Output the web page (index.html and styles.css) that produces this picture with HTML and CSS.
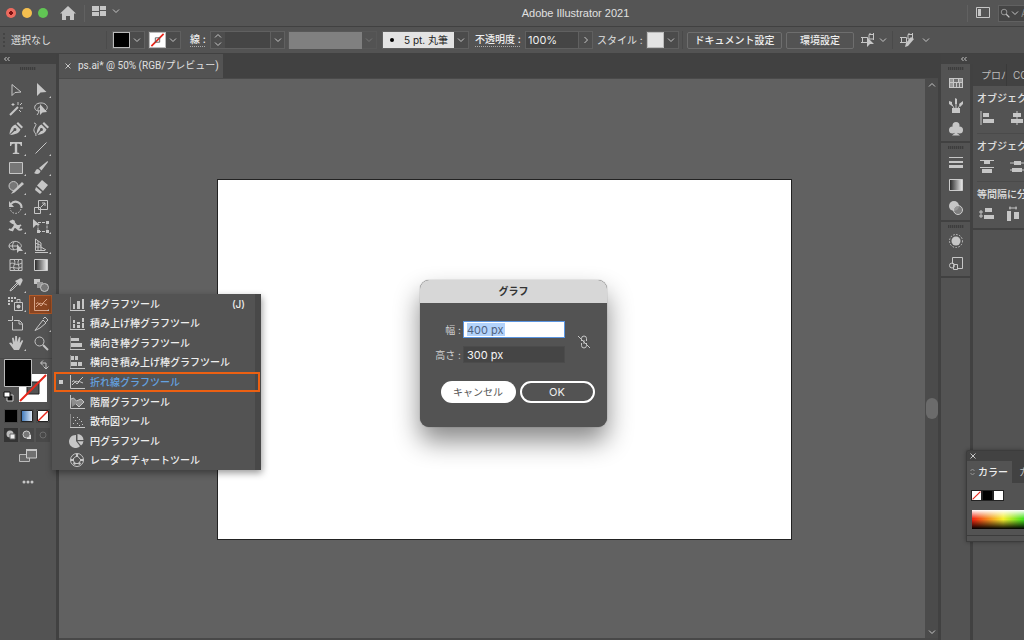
FILE: index.html
```html
<!DOCTYPE html>
<html lang="ja">
<head>
<meta charset="utf-8">
<title>Adobe Illustrator 2021</title>
<link rel="stylesheet" href="styles.css">
</head>
<body>
<svg class="defs" aria-hidden="true">
  <symbol id="down" viewBox="0 0 8 8"><path d="M1 2.500 4 5.500 7 2.500" class="ln"/></symbol>
  <symbol id="up" viewBox="0 0 8 8"><path d="M1 5.500 4 2.500 7 5.500" class="ln"/></symbol>
  <symbol id="none" viewBox="0 0 16 16"><path d="M0 0h16v16H0z" fill="#fff"/><path d="M1 15 15 1" stroke="#e8271b" stroke-width="2"/></symbol>
  <symbol id="collapse" viewBox="0 0 8 6"><path d="M3.500 1 1.500 3l2 2M6.500 1l-2 2 2 2" class="ln"/></symbol>
  <symbol id="bar" viewBox="0 0 16 16"><path d="M1.500 1v13" class="ax"/><path d="M1 14.500h15" class="ln"/><path d="M4 8h2v5H4zM8 5h3v8H8zM13 3h2v10h-2z" class="fl"/></symbol>
  <symbol id="stackbar" viewBox="0 0 16 16"><path d="M1.500 1v13" class="ax"/><path d="M1 14.500h15" class="ln"/><path d="M4 5h2v3H4zM4 9h2v4H4zM8 7h3v2H8zM8 10h3v3H8zM13 3h2v4h-2zM13 8h2v5h-2z" class="fl"/></symbol>
  <symbol id="hbar" viewBox="0 0 16 16"><path d="M1.500 1v13" class="ax"/><path d="M1 14.500h15" class="ln"/><path d="M2 3h8v3H2zM2 8h11v4H2z" class="fl"/></symbol>
  <symbol id="hstack" viewBox="0 0 16 16"><path d="M1.500 1v13" class="ax"/><path d="M1 14.500h15" class="ln"/><path d="M2 2h3v4H2zM6 2h3v4H6zM2 8h6v4H2zM9 8h4v4H9z" class="fl"/></symbol>
  <symbol id="line" viewBox="0 0 16 16"><path d="M1.500 1v13.500H16" class="ln"/><path d="m3 11 4-4 2 1 5-5M3 8l2-1.500L8 10l2.500-2.500L14 9" class="ln"/></symbol>
  <symbol id="area" viewBox="0 0 16 16"><path d="M1.500 1v13.500H16" class="ln"/><path d="M2 5 4.500 4l3 3L12 5l3 3-5 5-3-3-4 3z" fill="#8d8d8d"/><path d="M2 5 4.500 4l3 3L12 5l3 3-5 5-3-3" class="ln"/></symbol>
  <symbol id="scatter" viewBox="0 0 16 16"><path d="M1.500 1v13" class="ax"/><path d="M1 14.500h15" class="ln"/><path d="M4 4h1v1H4zM8 4h1v1H8zM6 7h1v1H6zM10 6h1v1h-1zM4 10h1v1H4zM8 10h1v1H8zM12 8h1v1h-1zM13 11h1v1h-1zM10 12h1v1h-1z" class="fl"/></symbol>
  <symbol id="pie" viewBox="0 0 16 16"><path d="M7 2v6l4 5.200A6.500 6.500 0 1 1 7 2z" class="fl"/><path d="M8.500 1A6 6 0 0 1 14.500 7h-6zM8.500 8.300h6a6 6 0 0 1-2.500 4.200z" class="fl"/></symbol>
  <symbol id="radar" viewBox="0 0 16 16"><circle cx="8" cy="8" r="6.500" class="ln"/><path d="M8 3.500 12 8l-2.500 3.500h-4L4 7z" class="ln"/><path d="M7 2h2v3H7zM11 7h3v2h-3zM2 7h3v2H2zM4 11l2-1 1 2-2 1zM10 10l2 1-1 2-2-1z" class="fl"/></symbol>
  <symbol id="select" viewBox="0 0 16 16"><path d="M4 2.500v11l3-3 6-.5z" class="ln"/></symbol>
  <symbol id="direct" viewBox="0 0 16 16"><path d="M4 1v13l3.500-3.500L13.500 10z" class="fl"/></symbol>
  <symbol id="wand" viewBox="0 0 16 16"><path d="M2 14 10 6" class="ln2"/><path d="M5 2v3M3.500 3.500h3M10 1v3M12 4l2-2M12 7h3M11 9l2 2" class="ln"/></symbol>
  <symbol id="lasso" viewBox="0 0 16 16"><path d="M12 10c3-2 3-5 0-7S3 2 2 5s1 5 4 5 3-4 1-4-3 3-1 5l-2 3" class="ln"/><path d="M7 3v11l2.500-2.500L14 11z" class="fl"/></symbol>
  <symbol id="pen" viewBox="0 0 16 16"><path d="m10 1 5 5-1.500 1.500-5-5zM7.500 3.500l5 5c-1 3-4 5-10 5.500H2L6.500 10A1.500 1.500 0 1 0 5.500 9L1.500 13.500C2 8 4 4.500 7.500 3.500z" class="fl"/></symbol>
  <symbol id="curve" viewBox="0 0 16 16"><path d="m11 1 5 5-1.500 1.500-5-5zM8.500 3.500l5 5c-1 3-4 5-9 5.500L8 10A1.500 1.500 0 1 0 7 9l-3.500 4.500C4 8 5.500 4.500 8.500 3.500z" class="fl"/><path d="M1 2c5 1-1 4 0 8 .5 2 2 2 2 5" class="ln"/></symbol>
  <symbol id="type" viewBox="0 0 16 16"><path d="M2 2h12v4h-1.200c-.2-1.500-.8-2.300-2.300-2.300H9.200v8.800l2 .5v1H4.800v-1l2-.5V3.700H5.500C4 3.700 3.400 4.500 3.200 6H2z" class="fl"/></symbol>
  <symbol id="seg" viewBox="0 0 16 16"><path d="M2.500 13.500 13.500 2.500" class="ln"/></symbol>
  <symbol id="rect" viewBox="0 0 16 16"><path d="M1.500 2.500h13v11h-13z" class="ln dim"/></symbol>
  <symbol id="brush" viewBox="0 0 16 16"><path d="M14.500 1 6 8l2.500 2.500L15 2zM5 9c-3 0-2 3-4 4 3 2 6 1 6.500-2z" class="fl"/></symbol>
  <symbol id="shaper" viewBox="0 0 16 16"><circle cx="5.500" cy="7" r="4.500" class="ln dim"/><path d="M14 3 5 12l-2 3 3.500-1.500L16 5z" class="fl"/></symbol>
  <symbol id="eraser" viewBox="0 0 16 16"><path d="m9 1 6 5-5 6-6-5.500zM3 8l6 5-2 2-5-4z" class="fl"/></symbol>
  <symbol id="rotate" viewBox="0 0 16 16"><path d="M3 5c4-5 11-1 10.500 4" class="ln2"/><path d="M1 2v6h5z" class="fl"/><path d="M13 10c-2 6-10 6-11-1" class="ln" stroke-dasharray="1.500 1.500"/></symbol>
  <symbol id="scale" viewBox="0 0 16 16"><path d="M5.500 1.500h9v9h-9zM1.500 8.500h6v6h-6zM8 8l4-4M9 4h3v3" class="ln"/></symbol>
  <symbol id="width" viewBox="0 0 16 16"><path d="M1 11c4 3 3-2 6-2s3 5 7 2M2 3c2 2 4 1 5 3s3 3 6 1M4 2l3 5-3 6" class="ln2"/><circle cx="5" cy="4" r="2" class="fl"/><circle cx="10" cy="9" r="2" class="fl"/></symbol>
  <symbol id="free" viewBox="0 0 16 16"><path d="M0 1v9l3-3h4z" class="fl"/><path d="M5 4.500h9v9H5z" class="ln" stroke-dasharray="3 1"/><path d="M13 3h3v3h-3zM13 12h3v3h-3zM4 12h3v3H4z" class="fl"/></symbol>
  <symbol id="builder" viewBox="0 0 16 16"><path d="M9 11c-4 2-8 0-8-3s5-6 9-4 4 5 2 6M1 8h9M6 4c-2 3-2 5 0 8" class="ln"/><path d="M9 6v9l2-2h4z" class="fl"/></symbol>
  <symbol id="persp" viewBox="0 0 16 16"><path d="M2.500 1v11.500H12M2.500 1 8 5v7M5 3v9M2.500 5 8 7.500M2.500 9H8l5 3M2 14.500h13" class="ln"/></symbol>
  <symbol id="mesh" viewBox="0 0 16 16"><path d="M2 2.500h12v11H2zM2 7c4-3 5 3 12-1M2 11c3-2 7 2 12-1M6 2.500c3 4-3 7 1 11M11 2.500c-3 4 2 7-1 11" class="ln"/></symbol>
  <symbol id="grad" viewBox="0 0 16 16"><path d="M1.500 2.500h13v11h-13z" fill="url(#gray)" stroke="#ccc"/></symbol>
  <symbol id="drop" viewBox="0 0 16 16"><path d="m9 6-6 6-1 2 2-1 6-6" class="ln"/><path d="m7 4 2-1 2-1c2-2 5 1 3 3l-1 2-1 2z" class="fl"/></symbol>
  <symbol id="blend" viewBox="0 0 16 16"><path d="M1 2h6v5H1z" class="fl"/><path d="M4 5h6v6H4z" fill="#999"/><circle cx="11.500" cy="10.500" r="4" class="ln dim"/></symbol>
  <symbol id="spray" viewBox="0 0 16 16"><path d="M6.500 6.500h8v8h-8zM9 3.500h3v3H9z" class="ln"/><circle cx="10.500" cy="10.500" r="2" class="fl"/><path d="M0 1h2v2H0zM3 1h2v2H3zM6 1h2v2H6zM0 4h2v2H0zM3 4h2v2H3zM0 7h2v2H0z" class="fl"/></symbol>
  <symbol id="artb" viewBox="0 0 16 16"><path d="M4.500 0v4.500H0M4.500 6v8h10V7.500l-3-3H6M11 5v3h3" class="ln"/></symbol>
  <symbol id="slice" viewBox="0 0 16 16"><path d="M3 13 10 4l3 3-6 5-5 2.500zM10 3l2-2 3 3-2 2" class="ln"/></symbol>
  <symbol id="hand" viewBox="0 0 16 16"><path d="m1 8 2-.5 2 2L4 3l1.500-.5L7 7l.2-6H9l.3 6L11 2l1.500.5L11.800 8 14 5l1.200.7L12.500 12 11 15H6z" class="fl"/></symbol>
  <symbol id="mag" viewBox="0 0 16 16"><circle cx="6.500" cy="6.500" r="4.500" class="ln"/><path d="m10 10 5 5" class="ln2"/></symbol>
  <symbol id="home" viewBox="0 0 16 16"><path d="M8 1 0 8.500h2V15h4v-4h4v4h4V8.500h2z" class="fl"/></symbol>
  <linearGradient id="gray"><stop stop-color="#222"/><stop offset="1" stop-color="#eee"/></linearGradient>
</svg>

<header class="titlebar">
  <div class="lights"><i class="red"></i><i class="yellow"></i><i class="green"></i></div>
  <button class="bare home" aria-label="ホーム"><svg class="i16"><use href="#home"/></svg></button>
  <button class="bare arrange" aria-label="ワークスペース">
    <svg width="14" height="10"><path d="M0 0h7v5H0zM0 6h7v4H0zM8 0h6v4H8zM8 5h6v5H8z" class="fl"/></svg>
    <svg class="i8"><use href="#down"/></svg>
  </button>
  <h1>Adobe Illustrator 2021</h1>
  <button class="bare layout" aria-label="レイアウト"><svg width="14" height="12"><path d="M.5.500h13v10H.5z" class="ln"/><path d="M2 2h3v7H2z" class="fl"/></svg></button>
  <label class="search"><svg width="10" height="10"><use href="#mag"/></svg><svg class="i8"><use href="#down"/></svg><input type="text" placeholder="Adobe" aria-label="検索"></label>
</header>

<div class="control">
  <span class="grip-v"></span>
  <span class="status">選択なし</span>
  <button class="pick" aria-label="塗り"><span class="chip black"></span><svg class="i8"><use href="#down"/></svg></button>
  <button class="pick" aria-label="線の色"><span class="chip"><svg viewBox="0 0 16 16"><use href="#none"/><path d="M5.500 5.500h5v5h-5z" fill="none" stroke="#555"/></svg></span><svg class="i8"><use href="#down"/></svg></button>
  <label class="dotted sen" for="stroke">線 :</label>
  <div class="field stroke"><button class="bare step" aria-label="増減"><svg class="i8"><use href="#up"/></svg><svg class="i8"><use href="#down"/></svg></button><input id="stroke" type="text"><button class="bare end" aria-label="線幅"><svg class="i8"><use href="#down"/></svg></button></div>
  <button class="pick profile" disabled aria-label="プロファイル"><span class="flat"></span><svg class="i8"><use href="#down"/></svg></button>
  <button class="pick brushpick"><span class="brushname"><b></b>5 pt. 丸筆</span><svg class="i8"><use href="#down"/></svg></button>
  <label class="dotted opa" for="opacity">不透明度 :</label>
  <div class="field opacity"><input id="opacity" type="text" value="100%"><button class="bare end" aria-label="不透明度"><svg width="8" height="8"><path d="m2.500 1 3 3-3 3" class="ln"/></svg></button></div>
  <span class="style">スタイル :</span>
  <button class="pick" aria-label="スタイル"><span class="chip pale"></span><svg class="i8"><use href="#down"/></svg></button>
  <span class="rule"></span>
  <button class="outlined doc">ドキュメント設定</button>
  <button class="outlined env">環境設定</button>
  <button class="bare pair" aria-label="類似オブジェクト"><svg width="14" height="14"><path d="M1.500 4.500h5v5h-5zM8 1.500h4.500V6H8zM0 4.500h2M0 9.500h2M9 0v2M12.500 0v7" class="ln"/><path d="M6 4v10l3-3h4z" class="fl"/></svg><svg class="i8"><use href="#down"/></svg></button>
  <span class="rule"></span>
  <button class="bare pair wide" aria-label="編集"><svg width="14" height="14"><path d="M1.500 4.500h5v5h-5zM8 1.500h4.500V6H8zM0 4.500h2M0 9.500h2M9 0v2M12.500 0v7" class="ln"/><path d="m11 4 3 2-6 7-3 1 1-4z" class="fl"/></svg><svg class="i8"><use href="#down"/></svg></button>
</div>

<div class="work">
  <aside class="tools">
    <div class="strip"><svg width="8" height="6"><use href="#collapse"/></svg></div>
    <span class="grip"></span>
    <div class="toolgrid">
      <button class="one" aria-label="選択"><svg><use href="#select"/></svg></button><button aria-label="ダイレクト選択"><svg><use href="#direct"/></svg></button>
      <button class="one" aria-label="自動選択"><svg><use href="#wand"/></svg></button><button class="one" aria-label="なげなわ"><svg><use href="#lasso"/></svg></button>
      <button aria-label="ペン"><svg><use href="#pen"/></svg></button><button class="one" aria-label="曲線"><svg><use href="#curve"/></svg></button>
      <button aria-label="文字"><svg><use href="#type"/></svg></button><button aria-label="直線"><svg><use href="#seg"/></svg></button>
      <button aria-label="長方形"><svg><use href="#rect"/></svg></button><button aria-label="ブラシ"><svg><use href="#brush"/></svg></button>
      <button aria-label="Shaper"><svg><use href="#shaper"/></svg></button><button aria-label="消しゴム"><svg><use href="#eraser"/></svg></button>
      <button aria-label="回転"><svg><use href="#rotate"/></svg></button><button aria-label="拡大縮小"><svg><use href="#scale"/></svg></button>
      <button aria-label="線幅"><svg><use href="#width"/></svg></button><button aria-label="自由変形"><svg><use href="#free"/></svg></button>
      <button aria-label="シェイプ形成"><svg><use href="#builder"/></svg></button><button aria-label="遠近グリッド"><svg><use href="#persp"/></svg></button>
      <button class="one" aria-label="メッシュ"><svg><use href="#mesh"/></svg></button><button class="one" aria-label="グラデーション"><svg><use href="#grad"/></svg></button>
      <button aria-label="スポイト"><svg><use href="#drop"/></svg></button><button class="one" aria-label="ブレンド"><svg><use href="#blend"/></svg></button>
      <button aria-label="シンボルスプレー"><svg><use href="#spray"/></svg></button><button class="current" aria-label="折れ線グラフ"><svg><path d="M1.500 1v13.500H16" class="ln"/><path d="m3 11 4-4 2 1 5-5M3 8l2-1.500L8 10l2.500-2.500L14 9" class="ln"/></svg></button>
      <button class="one" aria-label="アートボード"><svg><use href="#artb"/></svg></button><button aria-label="スライス"><svg><use href="#slice"/></svg></button>
      <button aria-label="手のひら"><svg><use href="#hand"/></svg></button><button class="one" aria-label="ズーム"><svg><use href="#mag"/></svg></button>
    </div>
    <svg class="fillstroke" width="52" height="48" role="img" aria-label="塗りと線">
      <path d="M19 15h28v28H19z" fill="#fff"/><path d="M27 23h12v12H27z" fill="#535353" stroke="#222"/><path d="m20 42 26-26" stroke="#e8271b" stroke-width="2"/>
      <path d="M4.500.500h27v27h-27z" stroke="#bbb"/><path d="M6 2h24v24H6z"/>
      <path d="M41 4h5v6M43 1.500 40.500 4 43 6.500M43.500 7.500 46 10l2.500-2.500" class="ln"/>
      <path d="M7 36h6v6H7z" fill="#111" stroke="#ccc"/><path d="M4 33h6v5H4z" fill="#fff" stroke="#111"/>
    </svg>
    <div class="modes">
      <button aria-label="カラー"><svg><path d="M0 0h12v12H0z"/></svg></button>
      <button aria-label="グラデーション"><svg><linearGradient id="blue"><stop stop-color="#3c76b8"/><stop offset="1" stop-color="#e6effa"/></linearGradient><path d="M.5.500h11v11H.5z" fill="url(#blue)" stroke="#222"/></svg></button>
      <button aria-label="なし"><svg><use href="#none" width="12" height="12"/><path d="M.5.500h11v11H.5z" fill="none" stroke="#222"/></svg></button>
    </div>
    <div class="modes draw">
      <button class="on" aria-label="標準描画"><svg><circle cx="5" cy="5" r="3.500" fill="#bbb"/><path d="M5 5h5v5H5z" fill="#eee" stroke="#666"/></svg></button>
      <button aria-label="背面描画"><svg><path d="M6 6h4v4H6z" fill="#ddd"/><circle cx="5.500" cy="5.500" r="3.500" fill="#777" stroke="#ccc"/></svg></button>
      <button aria-label="内側描画"><svg><circle cx="6" cy="6" r="3" fill="none" stroke="#6c6c6c"/></svg></button>
    </div>
    <button class="bare screen" aria-label="スクリーンモード"><svg width="18" height="14"><path d="M.5 5.500h10v7H.5z" fill="#666" stroke="#bbb"/><path d="M7.500 1h10v8h-10z" fill="#707070" stroke="#ccc"/><path d="M7 0h11v2H7z" class="fl"/></svg></button>
    <button class="bare more" aria-label="ツールバーを編集"><svg width="12" height="4"><circle cx="2" cy="2" r="1.500" class="fl"/><circle cx="6" cy="2" r="1.500" class="fl"/><circle cx="10" cy="2" r="1.500" class="fl"/></svg></button>
  </aside>

  <main class="document">
    <div class="tabs"><div class="tab"><button class="bare" aria-label="閉じる"><svg width="6" height="6"><path d="m.5.500 5 5M5.500.500l-5 5" class="ln"/></svg></button><span>ps.ai* @ 50% (RGB/プレビュー)</span></div></div>
    <div class="view">
      <div class="canvas"><div class="artboard"></div></div>
      <div class="scroll"><svg class="i8"><use href="#up"/></svg><span class="thumb"></span><svg class="i8"><use href="#down"/></svg></div>
    </div>
  </main>

  <aside class="dock">
    <div class="strip"><svg width="8" height="6"><use href="#collapse"/></svg></div>
    <div class="dockbody">
      <div class="icons">
        <div class="group"><span class="grip"></span>
          <button aria-label="スウォッチ"><svg><path d="M1 3h14v10H1z" class="fl"/><path d="M2 4h3v3H2zM11 4h3v3h-3zM2 8h3v4H2z" fill="#999"/><path d="M6 4h4v3H6zM6 8h2v4H6zM9 8h2v4H9zM12 8h2v4h-2z" fill="#707070"/></svg></button>
          <button aria-label="ブラシ"><svg><path d="M4 10h8v5H4z" class="fl"/><path d="M6 10 3 5M8 10V2M10 10l3-4" class="ln"/><path d="M1 3l3 1v4L1 6zM7 0l2 1v5H7zM11 6l4-3v3l-3 3z" class="fl"/></svg></button>
          <button aria-label="シンボル"><svg><circle cx="8" cy="4.500" r="3.500" class="fl"/><circle cx="4.500" cy="9" r="3.500" class="fl"/><circle cx="11.500" cy="9" r="3.500" class="fl"/><path d="M7 6h2v6l3 2.500H4L7 12z" class="fl"/></svg></button>
        </div>
        <div class="group"><span class="grip"></span>
          <button aria-label="線"><svg><path d="M1 3h14v1H1zM1 7h14v2H1zM1 11h14v3H1z" class="fl"/></svg></button>
          <button aria-label="グラデーション"><svg><use href="#grad"/></svg></button>
          <button aria-label="透明"><svg><circle cx="6" cy="6" r="5" class="fl"/><circle cx="10" cy="10" r="4.500" fill="#888" fill-opacity=".8" stroke="#ccc"/></svg></button>
        </div>
        <div class="group"><span class="grip"></span>
          <button aria-label="アピアランス"><svg><circle cx="8" cy="8" r="4.500" class="fl"/><circle cx="8" cy="8" r="6.500" class="ln" stroke-dasharray="1.500 1.500"/></svg></button>
          <button aria-label="グラフィックスタイル"><svg><path d="M4.500 8V1.500h10v11H9" class="ln"/><path d="M5.500 8.500h4v5h-4z" class="ln"/><circle cx="4" cy="9.500" r="2.500" class="ln"/></svg></button>
        </div>
      </div>
      <div class="props">
        <div class="ptabs"><button>プロパ</button><button>CC</button></div>
        <section><h2>オブジェクト</h2><div><svg><path d="M2 1v14" class="ln"/><path d="M4 3h6v4H4zM4 9h11v4H4z" class="fl"/></svg><svg><path d="M8 1v14" class="ln"/><path d="M4 3h8v4H4zM2 9h12v4H2z" class="fl"/></svg></div></section>
        <section><h2>オブジェクト</h2><div><svg><path d="M1 2.500h14M1 9.500h14" class="ln"/><path d="M5 3h6v3H5zM3 11h10v4H3z" class="fl"/></svg><svg><path d="M1 5h14M1 12h14" class="ln"/><path d="M5 3h7v4H5zM3 10h10v4H3z" class="fl"/></svg></div></section>
        <section><h2>等間隔に分布</h2><div class="near"><svg><path d="M6 2h7v4H6zM5 9h10v4H5z" class="fl"/><path d="M0 6h4M0 10h4M2 4v8" class="ln"/></svg><svg><path d="M2 5h4v10H2zM9 6h5v7H9z" class="fl"/><path d="M4 2h8M5 .5v3M11 .5v3" class="ln"/></svg></div></section>
      </div>
    </div>
  </aside>
</div>

<ul class="flyout">
  <li><button><svg><use href="#bar"/></svg>棒グラフツール<kbd>(J)</kbd></button></li>
  <li><button><svg><use href="#stackbar"/></svg>積み上げ棒グラフツール</button></li>
  <li><button><svg><use href="#hbar"/></svg>横向き棒グラフツール</button></li>
  <li><button><svg><use href="#hstack"/></svg>横向き積み上げ棒グラフツール</button></li>
  <li class="active"><button><svg><use href="#line"/></svg>折れ線グラフツール</button></li>
  <li><button><svg><use href="#area"/></svg>階層グラフツール</button></li>
  <li><button><svg><use href="#scatter"/></svg>散布図ツール</button></li>
  <li><button><svg><use href="#pie"/></svg>円グラフツール</button></li>
  <li><button><svg><use href="#radar"/></svg>レーダーチャートツール</button></li>
</ul>

<form class="dialog" role="dialog" aria-labelledby="dlg">
  <h2 id="dlg">グラフ</h2>
  <div class="size">
    <label for="w">幅 :</label><div class="box focus"><input id="w" type="text" value="400 px"></div>
    <label for="h">高さ :</label><div class="box"><input id="h" type="text" value="300 px"></div>
    <svg class="link" width="14" height="14"><path d="M4.500 6V3.500a2.500 2.500 0 0 1 5 0V6M4.500 8v2.500a2.500 2.500 0 0 0 5 0V8M7 5v4M1 1l12 12" class="ln"/></svg>
  </div>
  <div class="actions"><button type="button" class="cancel">キャンセル</button><button type="button" class="ok">OK</button></div>
</form>

<aside class="color">
  <div class="chead"><button class="bare" aria-label="閉じる"><svg width="6" height="6"><path d="m.5.500 5 5M5.500.500l-5 5" class="ln"/></svg></button></div>
  <div class="ctabs"><button class="on"><svg width="5" height="8"><path d="M.5 3 2.500 1l2 2M.5 5l2 2 2-2" class="ln"/></svg>カラー</button><button>カラーガイド</button></div>
  <div class="chips"><svg width="11" height="11"><use href="#none"/></svg><i></i><i class="white"></i></div>
  <div class="spectrum"></div>
  <div class="cfoot"></div>
</aside>
</body>
</html>
```
FILE: styles.css
```css
* { box-sizing: border-box; }
body {
  margin: 0; height: 100vh; display: flex; flex-direction: column; overflow: hidden;
  background: #535353; color: #e0e0e0;
  font: 10px/14px Inter, "Noto Sans CJK JP", sans-serif;
}
h1, h2, ul { margin: 0; padding: 0; font-weight: 400; list-style: none; }
button, input, kbd { font: inherit; color: inherit; }
button { border: 0; padding: 0; background: none; white-space: nowrap; }
input { border: 0; padding: 0; min-width: 0; background: none; outline: 0; }
svg { display: block; flex: none; }
.defs { position: absolute; width: 0; height: 0; }
.ln { fill: none; stroke: #c6c6c6; stroke-width: 1; }
.ln2 { fill: none; stroke: #c6c6c6; stroke-width: 2; }
.ax { fill: none; stroke: #8a8a8a; }
.fl { fill: #c6c6c6; }
.dim { fill: #777; }
.i8 { width: 8px; height: 8px; }
.i16 { width: 16px; height: 16px; }
.bare { display: flex; align-items: center; }

.titlebar { flex: none; height: 27px; display: flex; align-items: center; background: #555; border-bottom: 1px solid #414141; }
.lights { display: flex; gap: 6px; padding-left: 6px; width: 60px; }
.lights i { width: 10px; height: 10px; border-radius: 50%; }
.red { background: radial-gradient(circle, #7c1010 2px, #ed6a5e 2px); }
.yellow { background: #f5bf4f; }
.green { background: #61c554; }
.home { width: 24px; }
.arrange { border-left: 1px solid #616161; padding: 0 0 4px 7px; gap: 6px; height: 17px; }
.titlebar h1 { flex: 1; text-align: center; font: 11px/14px "Liberation Sans", sans-serif; padding-left: 64px; }
.layout { border-left: 1px solid #616161; padding-left: 8px; height: 17px; }
.search { margin-left: 8px; width: 26px; height: 17px; display: flex; align-items: center; gap: 1px; overflow: hidden; background: #454545; border: 1px solid #616161; border-right: 0; padding-left: 1px; }
.search input { width: 30px; flex: none; margin-left: 1px; }
.search input::placeholder { color: #8a8a8a; opacity: 1; }

.control { flex: none; height: 27px; display: flex; align-items: center; border-bottom: 1px solid #414141; white-space: nowrap; overflow: hidden; }
.control > * { flex: none; }
.grip-v { width: 2px; height: 14px; margin: 0 6px 0 3px; border-left: 2px dotted #444; }
.status { width: 96px; border-right: 1px solid #4b4b4b; line-height: 18px; margin-right: 5px; }
.pick { display: flex; align-items: center; height: 18px; border: 1px solid #606060; background: #4b4b4b; padding-right: 3px; gap: 3px; margin-right: 3px; }
.chip { width: 17px; height: 16px; border: 1px solid #bbb; background: #fff; }
.chip svg { width: 15px; height: 14px; }
.black { background: #000; }
.pale { background: #e3e3e3; }
.dotted { border-bottom: 1px dotted #aaa; line-height: 13px; color: #eee; font-weight: 500; }
.sen { margin: 0 5px 0 6px; width: 15px; }
.field { display: flex; height: 18px; border: 1px solid #606060; background: #454545; margin-right: 4px; }
.field input { flex: 1; font-size: 11px; color: #eee; }
.stroke { width: 75px; margin-right: 3px; }
.step { flex-direction: column; width: 14px; background: #4d4d4d; }
.end { width: 14px; border-left: 1px solid #606060; background: #4d4d4d; justify-content: center; }
.profile { background: #535353; border-color: #585858; margin-right: 5px; }
.profile .i8 { opacity: .3; }
.flat { width: 73px; height: 17px; background: #808080; }
.brushname { display: flex; align-items: center; gap: 10px; width: 71px; height: 16px; padding-left: 7px; background: #e3e3e3; color: #222; }
.brushname b { width: 4px; height: 4px; border-radius: 50%; background: #000; }
.opa { margin: 0 5px 0 3px; width: 45px; }
.opacity { width: 68px; }
.opacity input { padding-left: 2px; }
.style { width: 49px; }
.rule { width: 1px; height: 18px; background: #4a4a4a; }
.outlined { height: 17px; border: 1px solid #6e6e6e; border-radius: 2px; color: #eee; font-weight: 500; margin-left: 4px; line-height: 14px; }
.doc { width: 95px; }
.env { width: 68px; }
.pair { gap: 4px; margin: 0 5px 0 7px; }
.wide { gap: 8px; }

.work { flex: 1; min-height: 0; display: flex; background: #414141; }
.strip { height: 10px; background: #424242; display: flex; align-items: center; padding-left: 3px; }
.tools { width: 56px; flex: none; background: #535353; display: flex; flex-direction: column; }
.grip { display: block; width: 16px; height: 3px; flex: none; margin: 3px auto 0; background: repeating-linear-gradient(90deg, #3d3d3d 0 1px, #4b4b4b 1px 2px); }
.toolgrid { margin: 10px 3px 0; height: 273px; display: grid; grid-template: repeat(14, 1fr) / repeat(2, 25px); flex: none; }
.toolgrid button { position: relative; display: grid; place-items: center; }
.toolgrid svg { width: 16px; height: 16px; }
.toolgrid button:not(.one)::after { content: ""; position: absolute; right: 2px; bottom: 2px; border: 1px solid #c6c6c6; border-top-color: transparent; border-left-color: transparent; }
.toolgrid .current { background: #8a4521; border: 1px solid #b25a29; margin: 0 1px; }
.current .ln { stroke: #d8a488; }
.fillstroke { margin-top: 5px; border-top: 1px solid #4a4a4a; }
.modes { display: flex; padding-left: 4px; gap: 2px; margin-top: 3px; flex: none; }
.modes button { width: 14px; height: 14px; display: grid; place-items: center; background: #494949; }
.modes svg { width: 12px; height: 12px; }
.draw { margin-top: 5px; }
.modes .on { background: #343434; }
.screen { margin: 7px auto 0; }
.more { margin: 17px auto 0; }

.document { flex: 1; min-width: 0; margin-left: 3px; display: flex; flex-direction: column; }
.tabs { height: 24px; flex: none; display: flex; }
.tab { width: 164px; display: flex; align-items: center; gap: 7px; padding-left: 6px; background: #535353; white-space: nowrap; font-family: Roboto, "Noto Sans CJK JP", sans-serif; }
.view { flex: 1; min-height: 0; display: flex; border-top: 1px solid #4a4a4a; border-bottom: 2px solid #484848; }
.canvas { flex: 1; background: #616161; position: relative; overflow: hidden; }
.artboard { position: absolute; left: 158px; top: 100px; width: 575px; height: 361px; background: #fff; border: 1px solid #222; }
.scroll { width: 13px; background: #4b4b4b; display: flex; flex-direction: column; align-items: center; justify-content: space-between; padding: 2px 0; position: relative; }
.thumb { position: absolute; top: 57%; width: 12px; height: 21px; border-radius: 6px; background: #6b6b6b; }

.dock { flex: none; width: 83px; margin-left: 3px; display: flex; flex-direction: column; }
.dock .strip { padding-left: 19px; }
.dockbody { flex: 1; display: flex; gap: 3px; }
.icons { width: 29px; background: #535353; }
.group { border-bottom: 2px solid #414141; padding-bottom: 1px; }
.group .grip { margin-bottom: 1px; }
.group button { display: grid; place-items: center; width: 29px; height: 23px; }
.group svg, .props svg { width: 16px; height: 16px; }
.props { flex: 1; overflow: hidden; background: #535353; }
.ptabs { display: flex; height: 22px; background: #424242; color: #bbb; }
.ptabs button { width: 34px; padding-left: 8px; overflow: hidden; border-right: 1px solid #3a3a3a; flex: none; text-align: left; }
.ptabs button + button { padding-left: 6px; }
.props section { height: 48px; margin-left: 4px; padding-top: 5px; border-bottom: 1px solid #4a4a4a; white-space: nowrap; }
.props section div { display: flex; gap: 14px; margin-top: 5px; padding-left: 2px; }
.props .near { gap: 10px; }
.props section:last-child { border-bottom: 2px solid #414141; margin-left: 0; padding-left: 4px; }
.props h2 { font-size: 10px; line-height: 14px; font-weight: 500; }

.flyout { position: absolute; left: 52px; top: 294px; width: 209px; height: 176px; display: grid; grid-template-rows: repeat(9, 1fr); background: #535353; border-right: 6px solid #484848; box-shadow: 1px 3px 7px #0006; color: #eee; }
.flyout li { display: flex; position: relative; }
.flyout button { flex: 1; display: flex; align-items: center; gap: 5px; padding: 0 10px 0 17px; font-weight: 500; }
.flyout svg { width: 16px; height: 16px; }
.flyout kbd { margin-left: auto; }
.flyout .active { color: #64a2e0; }
.active::before { content: ""; position: absolute; left: 2px; right: -5px; top: 0; bottom: 0; border: 2px solid #ec6012; pointer-events: none; }
.active::after { content: ""; position: absolute; left: 7px; top: 8px; width: 4px; height: 4px; background: #ccc; }

.dialog { position: absolute; left: 420px; top: 280px; width: 187px; min-height: 147px; border-radius: 9px; overflow: hidden; background: #535353; box-shadow: 0 0 1px #555, 0 14px 26px #0007; }
.dialog h2 { height: 23px; line-height: 22px; font-size: 10px; text-align: center; background: #d7d7d7; color: #333; font-weight: 700; }
.size { display: grid; grid-template-columns: 29px 102px 14px; column-gap: 2px; row-gap: 8px; padding: 18px 13px 0 12px; align-items: center; }
.size label { text-align: right; white-space: nowrap; color: #d0d0d0; }
.box { display: flex; align-items: center; height: 17px; background: #454545; border: 1px solid #4b4b4b; padding-left: 3px; font-size: 11px; color: #f5f5f5; }
.box input { width: 38px; }
.focus { background: #fff; border-color: #5b95e0; color: #50627e; }
.focus input { background: #b3d3fb; height: 13px; }
.link { grid-column: 3; grid-row: 1 / 3; margin-left: 10px; }
.actions { display: flex; justify-content: center; gap: 4px; margin-top: 18px; padding-left: 8px; }
.actions button { width: 75px; height: 22px; border-radius: 11px; }
.cancel { background: #fff; color: #555; }
.actions .ok { border: 2px solid #fff; color: #eee; font-size: 11px; }

.color { position: absolute; right: 0; top: 450px; width: 58px; height: 92px; overflow: hidden; display: flex; flex-direction: column; background: #535353; border: 1px solid #3c3c3c; border-right: 0; border-radius: 3px 0 0 0; box-shadow: 0 0 4px #0005; }
.chead { height: 10px; background: #424242; padding: 2px 3px; }
.ctabs { display: flex; height: 22px; background: #424242; }
.ctabs button { display: flex; align-items: center; gap: 3px; flex: none; padding: 0 7px; color: #bbb; }
.ctabs svg { opacity: .6; }
.ctabs .on { width: 45px; padding: 0 0 0 3px; background: #535353; color: #eee; font-weight: 500; }
.chips { display: flex; padding: 7px 0 0 4px; }
.chips > * { width: 11px; height: 11px; border: 1px solid #222; }
.chips i { background: #000; }
.chips .white { background: #fff; }
.spectrum { height: 19px; margin: 9px 0 0 5px; background: linear-gradient(#fff, #fff0 45%, #0000 50%, #000), linear-gradient(90deg, #f02010, #f5ef30 60%, #40e020); }
.cfoot { margin-top: auto; height: 6px; border-top: 1px solid #3c3c3c; }
```
